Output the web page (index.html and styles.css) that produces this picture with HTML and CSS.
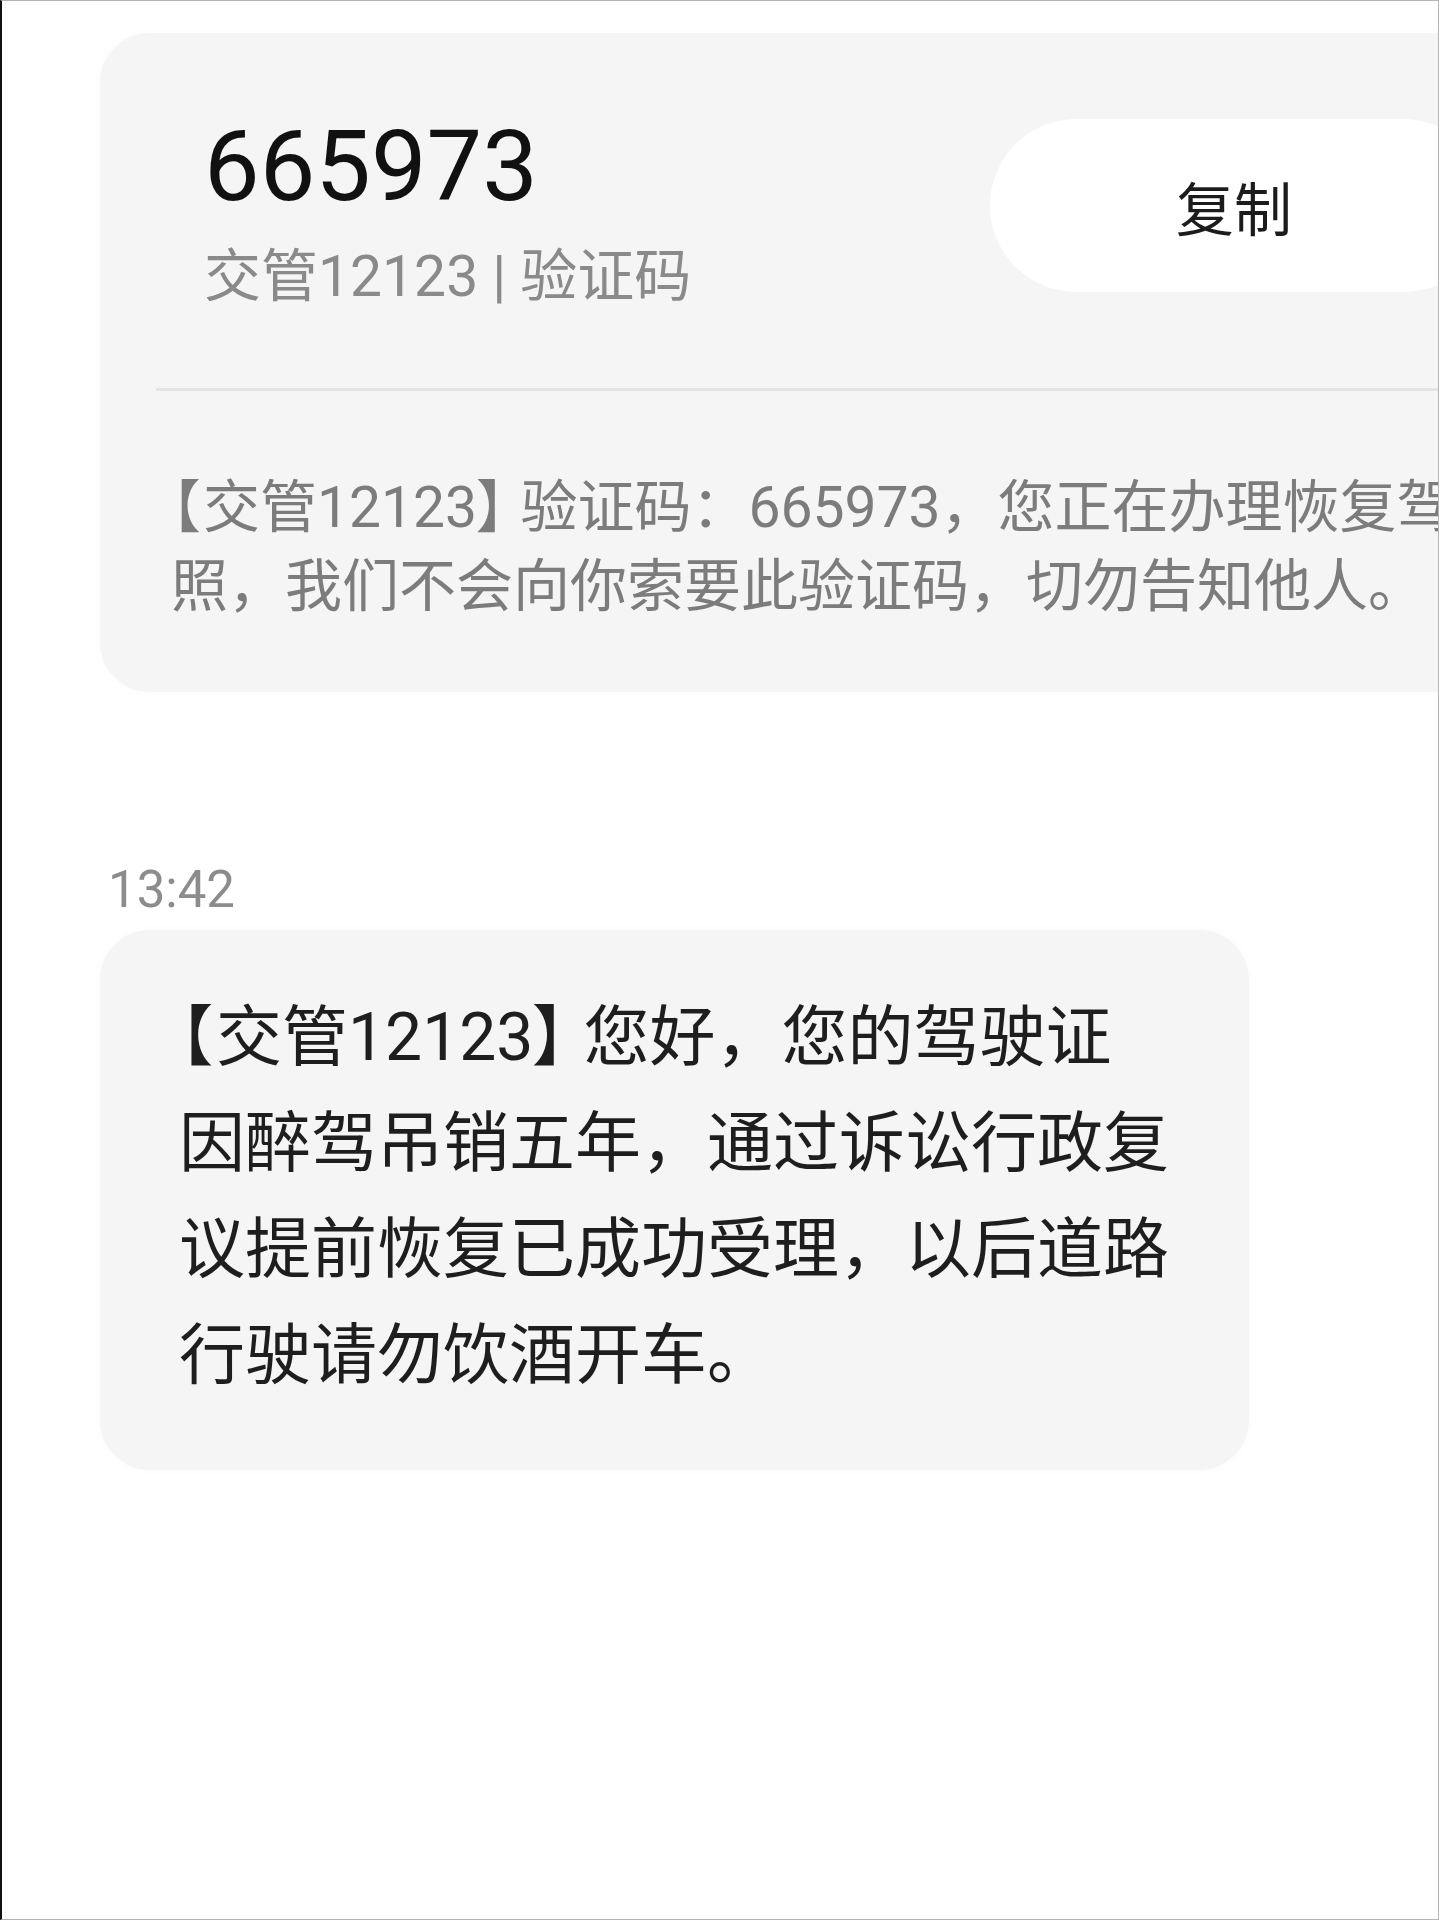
FILE: index.html
```html
<!DOCTYPE html>
<html lang="zh-CN">
<head>
<meta charset="utf-8">
<title>短信</title>
<link rel="stylesheet" href="styles.css">
</head>
<body>
<div class="screen">
  <section class="otp-card">
    <div class="otp-head">
      <div class="otp-info">
        <div class="otp-code">665973</div>
        <div class="otp-from">交管12123 | 验证码</div>
      </div>
      <div class="copy-btn">复制</div>
    </div>
    <div class="divider"></div>
    <p class="otp-text"><span class="br br-open">【</span>交管12123<span class="br br-close">】</span>验证码：665973，您正在办理恢复驾<br>照，我们不会向你索要此验证码，切勿告知他人。</p>
  </section>

  <div class="time">13:42</div>

  <section class="bubble">
    <p class="bubble-text"><span class="br br-open">【</span>交管12123<span class="br br-close">】</span>您好，您的驾驶证<br>因醉驾吊销五年，通过诉讼行政复<br>议提前恢复已成功受理，以后道路<br>行驶请勿饮酒开车。</p>
  </section>
</div>
</body>
</html>
```

FILE: styles.css
```css
html, body {
  margin: 0;
  padding: 0;
  background: #ffffff;
}

body {
  font-family: Roboto, "Noto Sans CJK SC", sans-serif;
  overflow: hidden;
}

.screen {
  box-sizing: border-box;
  width: 1439px;
  height: 1920px;
  border-left: 2px solid #111111;
  border-top: 1px solid #b4b4b4;
  border-right: 1px solid #b4b4b4;
  border-bottom: 1px solid #b4b4b4;
  overflow: hidden;
  padding-top: 32px;
  padding-left: 98px;
  display: flex;
  flex-direction: column;
  align-items: flex-start;
}

.otp-card {
  box-sizing: border-box;
  flex: none;
  width: 1440px;
  height: 659px;
  background: #f5f5f5;
  border-radius: 50px;
  box-shadow: 0 0 8px rgba(0, 0, 0, 0.025);
  display: flex;
  flex-direction: column;
}

.otp-head {
  display: flex;
  align-items: flex-start;
  padding: 78px 50px 0 104px;
}

.otp-info {
  flex: 1;
  display: flex;
  flex-direction: column;
  gap: 24px;
}

.otp-code {
  font-size: 99px;
  line-height: 110px;
  color: #111111;
}

.otp-from {
  font-size: 57px;
  line-height: 64px;
  color: #8a8a8a;
}

.copy-btn {
  box-sizing: border-box;
  flex: none;
  width: 500px;
  height: 173px;
  margin-top: 8px;
  padding-right: 12px;
  border-radius: 87px;
  background: #ffffff;
  display: flex;
  align-items: center;
  justify-content: center;
  font-size: 58px;
  color: #1c1c1c;
}

.divider {
  height: 3px;
  margin: 79px 0 0 56px;
  background: #e4e4e4;
}

.otp-text {
  margin: 77px 0 0 71px;
  font-size: 57px;
  line-height: 79px;
  color: #7c7c7c;
  white-space: nowrap;
}

.br {
  font-feature-settings: "palt" 1;
}

.br-open {
  padding-right: 0.06em;
}

.br-close {
  padding-right: 0.26em;
}

.time {
  margin: 168px 0 0 8px;
  font-size: 51px;
  line-height: 60px;
  color: #8c8c8c;
}

.bubble {
  box-sizing: border-box;
  width: 1149px;
  margin-top: 10px;
  padding: 55px 0 61px 79px;
  background: #f5f5f5;
  border-radius: 50px;
  box-shadow: 0 0 8px rgba(0, 0, 0, 0.025);
}

.bubble-text {
  margin: 0;
  font-size: 66px;
  line-height: 106px;
  color: #1e1e1e;
  white-space: nowrap;
}
```
